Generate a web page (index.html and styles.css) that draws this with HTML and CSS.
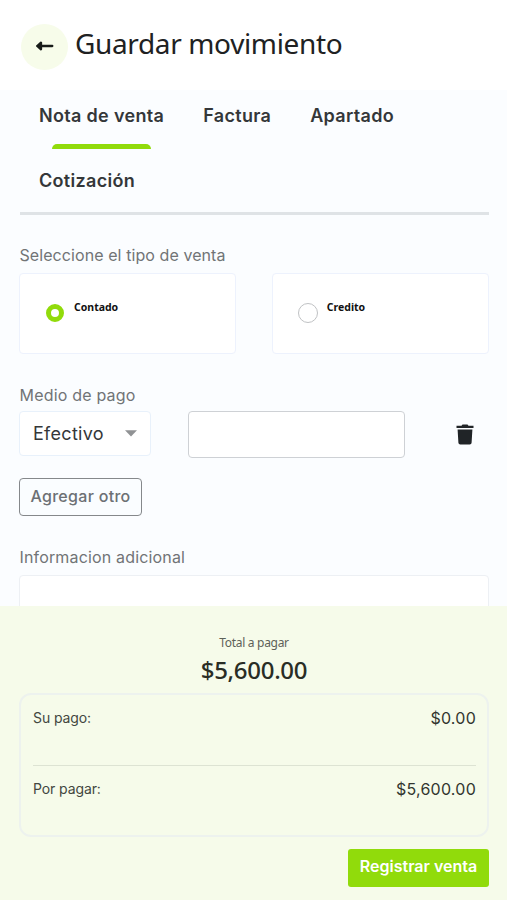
FILE: index.html
```html
<!DOCTYPE html>
<html lang="es">
<head>
<meta charset="utf-8">
<title>Guardar movimiento</title>
<link rel="stylesheet" href="styles.css">
</head>
<body>
<div class="screen">
  <header class="header">
    <button class="back" aria-label="Volver">
      <svg width="18" height="10" viewBox="0 0 18 10"><path d="M1.200 5 5 1.700v6.600zM4 5h12.300" fill="#171b18" stroke="#171b18" stroke-width="2.300" stroke-linejoin="round" stroke-linecap="round"/></svg>
    </button>
    <h1 class="title">Guardar movimiento</h1>
  </header>
  <main class="content">
    <nav class="tabs">
      <a class="tab active">Nota de venta</a>
      <a class="tab">Factura</a>
      <a class="tab">Apartado</a>
      <a class="tab">Cotización</a>
    </nav>
    <div class="label">Seleccione el tipo de venta</div>
    <div class="options">
      <label class="option"><i class="radio checked"></i><span>Contado</span></label>
      <label class="option"><i class="radio"></i><span>Credito</span></label>
    </div>
    <div class="label payment-label">Medio de pago</div>
    <div class="payment">
      <div class="select"><span>Efectivo</span><svg width="12" height="7" viewBox="0 0 12 7"><path d="M0 .3h12L6 6.500z" fill="#909294"/></svg></div>
      <div class="amount"></div>
      <svg class="trash" width="18" height="21" viewBox="0 0 18 21"><path d="M.5 1.800H5.500L6.500.500h5l1 1.300h5v2.300H.5zM1.600 5.500h14.800l-.8 13.200q-.1 1.800-1.900 1.800H4.300q-1.800 0-1.900-1.800z" fill="#202427"/></svg>
    </div>
    <button class="add">Agregar otro</button>
    <div class="label info-label">Informacion adicional</div>
    <div class="notes"></div>
  </main>
  <footer class="footer">
    <div class="total-label">Total a pagar</div>
    <div class="total">$5,600.00</div>
    <div class="summary">
      <div class="line"><span>Su pago:</span><span class="value">$0.00</span></div>
      <div class="line"><span>Por pagar:</span><span class="value">$5,600.00</span></div>
    </div>
    <button class="submit">Registrar venta</button>
  </footer>
</div>
</body>
</html>
```
FILE: styles.css
```css
* { box-sizing: border-box; }
body { margin: 0; background: #fff; font-family: Inter, "Liberation Sans", sans-serif; color: #343739; }
button { font: inherit; padding: 0; }
.screen { height: 900px; display: flex; flex-direction: column; overflow: hidden; }
.header { height: 90px; flex: none; display: flex; align-items: flex-start; padding: 24px 0 0 21px; }
.back { width: 47px; height: 46px; border: 0; border-radius: 50%; background: #f7fcea; display: flex; align-items: center; justify-content: center; padding: 0 0 2px 1px; }
.title { margin: -1px 0 0 7px; font: 400 28px/40px "Noto Sans", sans-serif; letter-spacing: -.36px; color: #202122; white-space: nowrap; }
.content { height: 516px; flex: none; overflow: hidden; background: #fbfdff; padding: 0 18.500px 0 19px; }
.tabs { height: 125px; display: flex; flex-wrap: wrap; align-content: flex-start; column-gap: 39px; padding: 0 19px; border-bottom: 3px solid #dfe3e6; margin: 0 0 0 1px; }
.tab { height: 65px; line-height: 52px; font-size: 18px; font-weight: 600; letter-spacing: .32px; white-space: nowrap; }
.tab.active::after { content: ""; display: block; width: 99px; height: 5px; margin: 2px 0 0 13px; border-radius: 5px 5px 0 0; background: #91db0b; }
.label { height: 24px; line-height: 24px; margin: 28px 0 0 .5px; font-size: 16px; letter-spacing: .08px; color: #717476; white-space: nowrap; }
.options { display: flex; gap: 36px; margin-top: 6px; }
.option { flex: 1; height: 81px; border: 1px solid #edf2fd; border-radius: 4px; background: #fff; display: flex; padding: 29px 0 0 25px; font: 700 10.500px/10px "Noto Sans", sans-serif; color: #111; }
.option span { margin: -1px 0 0 9px; }
.radio { width: 20px; height: 20px; border: 1.500px solid #c0c2c4; border-radius: 50%; }
.radio.checked { width: 18px; height: 18px; margin: 1px; border: 5.500px solid #91db0b; }
.payment-label { margin-top: 29px; letter-spacing: .2px; }
.payment { display: flex; align-items: flex-start; margin-top: 4px; }
.select { width: 132px; height: 45px; border: 1px solid #e8f1fb; border-radius: 4px; background: #fff; display: flex; align-items: center; justify-content: space-between; padding: 0 13px; font-size: 18px; letter-spacing: .3px; }
.amount { width: 217px; height: 47px; margin-left: 37px; border: 1px solid #ced1d5; border-radius: 4px; background: #fff; }
.trash { margin: 13px 0 0 51px; }
.add { display: block; width: 123px; height: 38px; margin-top: 20px; border: 1.500px solid #85888b; border-radius: 4px; background: #fafdff; font-size: 16px; font-weight: 500; line-height: 20px; padding-bottom: 2px; letter-spacing: .3px; color: #6c7074; white-space: nowrap; }
.info-label { margin-top: 29px; letter-spacing: .16px; }
.notes { height: 50px; margin-top: 6px; border: 1px solid #edf0f4; border-radius: 4px; background: #fff; }
.footer { height: 294px; background: #f6fbea; padding: 27px 18px 0 19px; display: flex; flex-direction: column; }
.total-label { height: 20px; font: 400 12px/20px "Noto Sans", sans-serif; letter-spacing: -.3px; text-align: center; color: #5d6158; }
.total { height: 34px; font: 500 24px/34px "Noto Sans", sans-serif; letter-spacing: -.3px; text-align: center; color: #292d25; margin-bottom: 6px; }
.summary { height: 144px; flex: none; border: 2px solid #edf2ee; border-radius: 12px; padding: 0 11px 0 12px; }
.line { height: 71px; display: flex; justify-content: space-between; line-height: 46px; font-size: 14px; letter-spacing: -.1px; color: #43473f; }
.line:first-child { border-bottom: 1px solid #dde3d3; }
.value { font-size: 16px; line-height: 47px; letter-spacing: .25px; color: #32362f; }
.submit { flex: none; width: 141px; height: 38px; margin: 12px 0 0 auto; border: 0; border-radius: 3px; background: #91db0b; color: #fff; font-size: 16px; font-weight: 600; line-height: 20px; padding-bottom: 4px; white-space: nowrap; }
```
